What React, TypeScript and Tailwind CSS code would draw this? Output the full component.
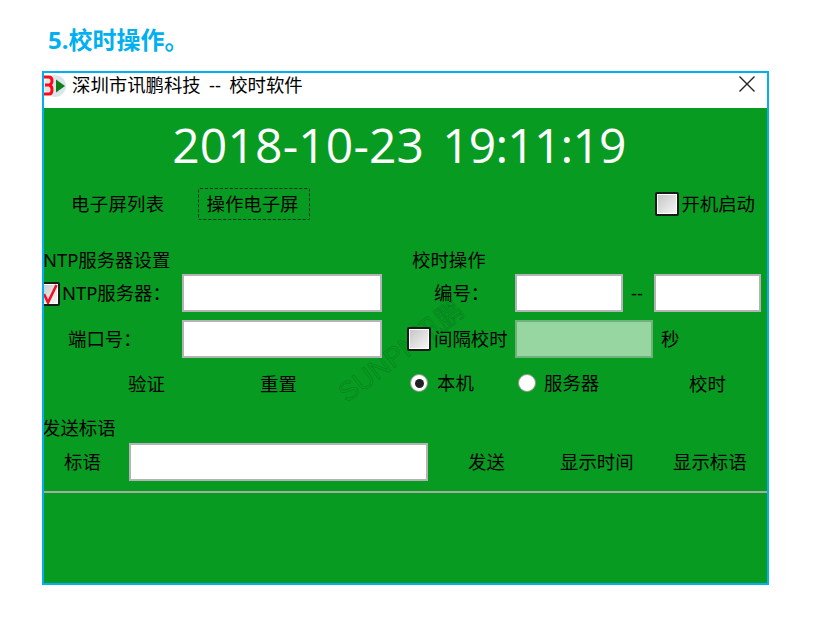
import React from "react";

function Check({ on, className = "" }: { on?: boolean; className?: string }) {
  return (
    <span className={`relative block h-[24px] w-[24px] shrink-0 rounded-[2px] border-2 border-[#1a1a1a] bg-linear-to-br from-[#c4c4c4] to-[#f8f8f8] shadow-[inset_0_0_0_1px_#ffffff] ${className}`}>
      {on && (
        <svg viewBox="0 0 20 20" className="absolute inset-0 h-full w-full">
          <path d="M6 10 L10 18.5 L18.5 1" fill="none" stroke="#f01020" strokeWidth="2.6" />
        </svg>
      )}
    </span>
  );
}

function Field({ className = "" }: { className?: string }) {
  return <span className={`relative block h-[38px] shrink-0 border-2 border-[#b4b4b8] bg-white ${className}`} />;
}

function Radio({ on, className = "" }: { on?: boolean; className?: string }) {
  return (
    <span className={`flex h-[18px] w-[18px] shrink-0 items-center justify-center rounded-full border border-[#8a9a8a] bg-white ${className}`}>
      {on && <span className="block h-[9px] w-[9px] rounded-full bg-[#222222]" />}
    </span>
  );
}

export default function App() {
  return (
    <div className="h-[622px] w-[813px] overflow-hidden whitespace-nowrap bg-white pl-[42px] pt-[24px] text-[18.4px] leading-[26px] text-black [font-family:'Noto_Sans','Noto_Sans_CJK_SC',sans-serif]">
      <h1 className="ml-[6px] h-[47px] text-[24px] font-bold leading-[32px] text-[#00b0f0]">5.校时操作。</h1>
      <div className="relative h-[514px] w-[727px] overflow-hidden border-2 border-[#00b0f0] bg-[#089b21]">
        <span className="absolute left-[298px] top-[310px] block origin-left rotate-[-37deg] whitespace-nowrap text-[27px] leading-none text-transparent [-webkit-text-stroke:0.7px_rgba(0,70,20,0.3)] [font-family:'Liberation_Sans','Noto_Sans_CJK_SC',sans-serif]">
          SUNPN讯鹏
        </span>

        <div className="flex h-[35px] items-center bg-white pr-[12px]">
          <svg viewBox="0 0 22 22" className="mt-[-9px] h-[22px] w-[22px] shrink-0">
            <circle cx="11" cy="11" r="11" fill="#dbe6ea" />
            <path d="M-1 2 H5 Q8 2 8 6 Q8 9 5.5 10 Q8 11 8 15 Q8 19 5 19 H-1 M1 10 H5" fill="none" stroke="#ff0a14" strokeWidth="3" />
            <path d="M12 4.5 L21 11 L12 17.5 Z" fill="#0f7d18" />
          </svg>
          <span className="ml-[6px] mt-[-11px] whitespace-pre [word-spacing:3.5px]">深圳市讯鹏科技 -- 校时软件</span>
          <svg viewBox="0 0 16 16" className="ml-auto mt-[-13px] h-[16px] w-[16px] shrink-0">
            <path d="M0.5 0.5 L15.5 15.5 M15.5 0.5 L0.5 15.5" stroke="#222222" strokeWidth="1.4" fill="none" />
          </svg>
        </div>

        <div className="flex h-[80px] items-center justify-center gap-[18px] pb-[7px] pr-[13px] text-[48px] leading-none text-white [font-family:'Open_Sans',sans-serif]">
          <span className="tracking-[0.15px]">2018-10-23</span>
          <span className="tracking-[-0.8px]">19:11:19</span>
        </div>

        <div className="flex h-[32px] items-center">
          <span className="ml-[27px] w-[93px] tracking-[0.3px]">电子屏列表</span>
          <span className="ml-[34px] flex h-[32px] w-[112px] items-center justify-center rounded-[2px] border border-dashed border-[#10301a] pr-[3px]">操作电子屏</span>
          <span className="ml-auto flex items-center pr-[12px]">
            <Check />
            <span className="ml-[2px]">开机启动</span>
          </span>
        </div>

        <div className="mt-[28px] flex h-[24px] items-center">
          <span className="ml-[-1px] w-[369px]">NTP服务器设置</span>
          <span>校时操作</span>
        </div>

        <div className="mt-[2px] flex h-[38px] items-center">
          <Check on className="ml-[-8px] mt-[2px]" />
          <span className="ml-[2px] w-[120px]">NTP服务器：</span>
          <Field className="w-[200px]" />
          <span className="ml-[52px] w-[81px]">编号：</span>
          <Field className="w-[108px]" />
          <span className="ml-[8px] w-[23px]">--</span>
          <Field className="w-[107px]" />
        </div>

        <div className="mt-[8px] flex h-[38px] items-center">
          <span className="ml-[24px] w-[114px]">端口号：</span>
          <Field className="w-[200px]" />
          <Check className="ml-[25px]" />
          <span className="ml-[3px] w-[81px]">间隔校时</span>
          <span className="relative block h-[38px] w-[138px] shrink-0 border-2 border-[#6cb27a] bg-[#97d6a0]" />
          <span className="ml-[8px]">秒</span>
        </div>

        <div className="mt-[13px] flex h-[26px] items-center">
          <span className="ml-[84px] w-[132px]">验证</span>
          <span className="w-[150px]">重置</span>
          <Radio on className="mt-[-2px]" />
          <span className="ml-[9px] mt-[-2px] w-[81px]">本机</span>
          <Radio className="mt-[-2px]" />
          <span className="ml-[8px] mt-[-2px] w-[145px]">服务器</span>
          <span>校时</span>
        </div>

        <div className="mt-[18px] flex h-[26px] items-center">
          <span className="ml-[-2px]">发送标语</span>
        </div>

        <div className="mt-[2px] flex h-[38px] items-center">
          <span className="ml-[20px] w-[65px]">标语</span>
          <Field className="w-[299px]" />
          <span className="ml-[40px] w-[92px]">发送</span>
          <span className="w-[113px]">显示时间</span>
          <span>显示标语</span>
        </div>

        <div className="mt-[10px] h-[2px] bg-[#a4aca4]" />
      </div>
    </div>
  );
}
